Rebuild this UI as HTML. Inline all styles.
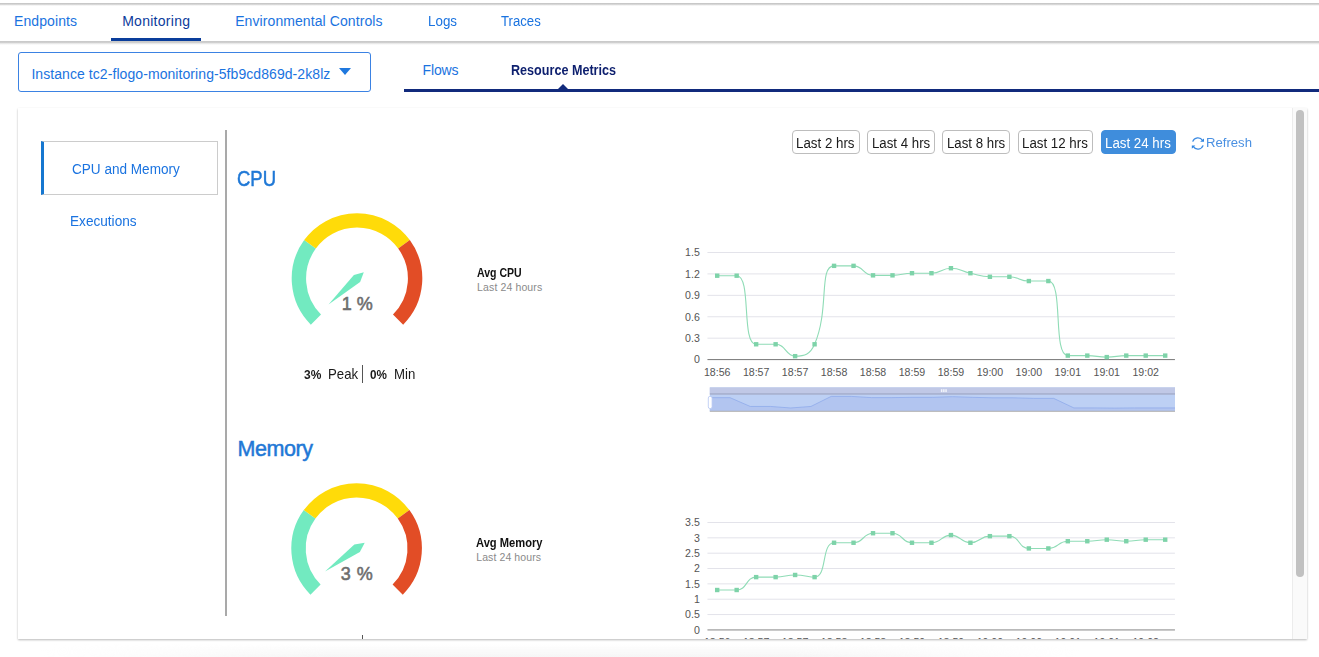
<!DOCTYPE html>
<html lang="en"><head><meta charset="utf-8"><title>Monitoring - Resource Metrics</title>
<style>
html,body{margin:0;padding:0;}
body{width:1319px;height:657px;overflow:hidden;background:#fff;position:relative;font-family:"Liberation Sans",Arial,sans-serif;}
.t{position:absolute;white-space:nowrap;line-height:1;transform-origin:0 50%;}
.abs{position:absolute;}
#topbar{position:absolute;left:0;top:2.6px;width:1319px;height:3.8px;background:linear-gradient(to bottom,#c6c6c6 0,#cbcbcb 38%,#ececec 70%,#fff 100%);}
#topcover{position:absolute;left:0;top:41.1px;width:1319px;height:4.2px;background:linear-gradient(to bottom,#c8c8c8 0,#cdcdcd 35%,#eeeeee 68%,#fff 100%);}
#tabul{position:absolute;left:111px;top:37.6px;width:90px;height:3.8px;background:#0a3d9b;}
#inst{position:absolute;left:18px;top:52px;width:351px;height:38px;border:1px solid #3b82e3;border-radius:3px;background:#fff;}
#caret{position:absolute;left:338.7px;top:68.3px;width:0;height:0;border-left:6.5px solid transparent;border-right:6.5px solid transparent;border-top:7.5px solid #1f78de;}
#subline{position:absolute;left:404px;top:89px;width:915px;height:2.8px;background:#112a7c;}
#subtri{position:absolute;left:557.6px;top:84.4px;width:0;height:0;border-left:5.7px solid transparent;border-right:5.7px solid transparent;border-bottom:5px solid #112a7c;}
#panel{position:absolute;left:18px;top:107.5px;width:1289.2px;height:531.5px;background:#fff;box-shadow:0 0.5px 2px rgba(0,0,0,.28);overflow:hidden;}
#in{position:absolute;left:-18px;top:-107.5px;width:1319px;height:800px;}
#navact{position:absolute;left:41px;top:141px;width:173px;height:52.3px;border:1px solid #ccc;border-left:3px solid #1677d0;background:#fff;}
#vdiv{position:absolute;left:225.2px;top:130px;width:1.9px;height:485.5px;background:#a9a9a9;}
.btn{position:absolute;top:130.4px;height:21.6px;border:1px solid #bdbdbd;border-radius:4px;background:#fff;}
.btn.on{background:#3f8ddc;border-color:#3f8ddc;}
#sbtrack{position:absolute;left:1292.3px;top:107.5px;width:15.2px;height:532px;background:#fafafa;border-left:1px solid #ececec;}
#sbthumb{position:absolute;left:1296.2px;top:110.3px;width:8px;height:467px;border-radius:4px;background:#c1c1c1;}
.pm{position:absolute;width:1px;background:#555;}
#botfade{position:absolute;left:40px;top:644px;width:1040px;height:13px;background:linear-gradient(to bottom,rgba(247,247,247,0),#f6f6f6);-webkit-mask-image:linear-gradient(to right,transparent,#000 28%,#000 72%,transparent);mask-image:linear-gradient(to right,transparent,#000 28%,#000 72%,transparent);}
svg{position:absolute;left:0;top:0;overflow:visible;}
svg text{font-family:"Liberation Sans",Arial,sans-serif;}
</style></head><body>
<div id="topbar"></div><div id="topcover"></div>
<div id="tabul"></div><div id="botfade"></div>

<nav id="tabs">
<span class="t" style="left:14.10px;top:13.95px;font-size:14px;color:#1a73e0;letter-spacing:0.078px;">Endpoints</span>
<span class="t" style="left:122.20px;top:13.95px;font-size:14px;color:#0b3b9c;letter-spacing:0.270px;">Monitoring</span>
<span class="t" style="left:235.20px;top:13.95px;font-size:14px;color:#1a73e0;letter-spacing:0.085px;">Environmental Controls</span>
<span class="t" style="left:427.70px;top:13.95px;font-size:14px;color:#1a73e0;transform:scaleX(0.9555);">Logs</span>
<span class="t" style="left:501.10px;top:13.95px;font-size:14px;color:#1a73e0;transform:scaleX(0.9393);">Traces</span>
</nav>
<div id="inst"></div>
<span class="t" style="left:31.40px;top:66.85px;font-size:14px;color:#1a73e0;letter-spacing:0.071px;">Instance tc2-flogo-monitoring-5fb9cd869d-2k8lz</span>
<div id="caret"></div>
<span class="t" style="left:422.50px;top:62.65px;font-size:14px;color:#1a73e0;letter-spacing:-0.139px;">Flows</span>
<span class="t" style="left:510.80px;top:62.65px;font-size:14px;color:#0d1f6e;font-weight:700;transform:scaleX(0.8996);">Resource Metrics</span>
<div id="subline"></div><div id="subtri"></div>
<div id="panel"><div id="in">
<div id="navact"></div>
<span class="t" style="left:72.30px;top:161.65px;font-size:14px;color:#1a73e0;transform:scaleX(0.9689);">CPU and Memory</span>
<span class="t" style="left:70.20px;top:213.95px;font-size:14px;color:#1a73e0;transform:scaleX(0.9724);">Executions</span>
<div id="vdiv"></div>
<div class="btn" style="left:791.8px;width:65.8px"></div>
<span class="t" style="left:796.10px;top:135.85px;font-size:14px;color:#1a1a1a;transform:scaleX(0.9516);">Last 2 hrs</span>
<div class="btn" style="left:867.3px;width:65.5px"></div>
<span class="t" style="left:871.60px;top:135.85px;font-size:14px;color:#1a1a1a;transform:scaleX(0.9467);">Last 4 hrs</span>
<div class="btn" style="left:942.3px;width:65.5px"></div>
<span class="t" style="left:946.60px;top:135.85px;font-size:14px;color:#1a1a1a;transform:scaleX(0.9467);">Last 8 hrs</span>
<div class="btn" style="left:1017.5px;width:73.8px"></div>
<span class="t" style="left:1022.00px;top:135.85px;font-size:14px;color:#1a1a1a;transform:scaleX(0.9501);">Last 12 hrs</span>
<div class="btn on" style="left:1100.7px;width:73.0px"></div>
<span class="t" style="left:1105.00px;top:135.85px;font-size:14px;color:#fff;transform:scaleX(0.9501);">Last 24 hrs</span>
<span class="t" style="left:1205.50px;top:136.09px;font-size:13.6px;color:#4a90e2;transform:scaleX(0.9661);">Refresh</span>
<span class="t" style="left:236.80px;top:168.50px;font-size:21.5px;color:#1f78d6;transform:scaleX(0.8593);-webkit-text-stroke:0.5px #1f78d6;">CPU</span>
<span class="t" style="left:476.70px;top:267.32px;font-size:12.5px;color:#111;font-weight:700;transform:scaleX(0.8432);">Avg CPU</span>
<span class="t" style="left:477.10px;top:281.61px;font-size:10.5px;color:#8a8a8a;letter-spacing:0.123px;">Last 24 hours</span>
<span class="t" style="left:237.40px;top:438.50px;font-size:21.5px;color:#1f78d6;letter-spacing:-0.387px;-webkit-text-stroke:0.5px #1f78d6;">Memory</span>
<span class="t" style="left:475.80px;top:537.32px;font-size:12.5px;color:#111;font-weight:700;transform:scaleX(0.8920);">Avg Memory</span>
<span class="t" style="left:476.20px;top:551.61px;font-size:10.5px;color:#8a8a8a;letter-spacing:0.098px;">Last 24 hours</span>
<span class="t" style="left:304.30px;top:368.62px;font-size:12.5px;color:#1a1a1a;font-weight:700;transform:scaleX(0.9578);">3%</span>
<span class="t" style="left:327.80px;top:366.93px;font-size:14.5px;color:#1a1a1a;transform:scaleX(0.9101);">Peak</span>
<div class="pm" style="left:362px;top:365.1px;height:18.3px"></div>
<span class="t" style="left:369.90px;top:368.62px;font-size:12.5px;color:#1a1a1a;font-weight:700;transform:scaleX(0.9356);">0%</span>
<span class="t" style="left:394.00px;top:366.93px;font-size:14.5px;color:#1a1a1a;transform:scaleX(0.9118);">Min</span>
<span class="t" style="left:304.30px;top:640.12px;font-size:12.5px;color:#1a1a1a;font-weight:700;transform:scaleX(0.9578);">5%</span>
<span class="t" style="left:327.80px;top:638.43px;font-size:14.5px;color:#1a1a1a;transform:scaleX(0.9101);">Peak</span>
<div class="pm" style="left:362px;top:635.1px;height:18.3px"></div>
<span class="t" style="left:369.90px;top:640.12px;font-size:12.5px;color:#1a1a1a;font-weight:700;transform:scaleX(0.9356);">1%</span>
<span class="t" style="left:394.00px;top:638.43px;font-size:14.5px;color:#1a1a1a;transform:scaleX(0.9118);">Min</span>
<svg width="1319" height="800" viewBox="0 0 1319 800">
<g id="ricon" transform="translate(1197.9,143.5)"><path d="M-5.2,-1.9A5.5,5.5 0 0 1 4.7,-2.9" fill="none" stroke="#3a8ae2" stroke-width="1.3"/><path d="M5.2,1.9A5.5,5.5 0 0 1 -4.7,2.9" fill="none" stroke="#3a8ae2" stroke-width="1.3"/><polygon points="6.1,-5.1 6.1,-1.7 2.2,-1.7" fill="#2f84e0"/><polygon points="-6.1,5.3 -6.1,1.9 -2.6,1.9" fill="#2f84e0"/></g>
<path d="M315.92,319.58A58.099999999999994,58.099999999999994 0 0 1 310.00,244.35" fill="none" stroke="#72eac0" stroke-width="14.4"/>
<path d="M310.00,244.35A58.099999999999994,58.099999999999994 0 0 1 404.00,244.35" fill="none" stroke="#ffdb09" stroke-width="14.4"/>
<path d="M404.00,244.35A58.099999999999994,58.099999999999994 0 0 1 398.08,319.58" fill="none" stroke="#e24d26" stroke-width="14.4"/>
<polygon points="363.80,272.31 353.90,275.10 328.52,304.41 360.10,281.90" fill="#72eac0"/>
<text x="341.8" y="309.7" font-size="18" font-weight="400" fill="#6e6e6e" stroke="#6e6e6e" stroke-width="0.55" textLength="30.9" lengthAdjust="spacing">1 %</text>
<path d="M315.52,589.58A58.099999999999994,58.099999999999994 0 0 1 309.60,514.35" fill="none" stroke="#72eac0" stroke-width="14.4"/>
<path d="M309.60,514.35A58.099999999999994,58.099999999999994 0 0 1 403.60,514.35" fill="none" stroke="#ffdb09" stroke-width="14.4"/>
<path d="M403.60,514.35A58.099999999999994,58.099999999999994 0 0 1 397.68,589.58" fill="none" stroke="#e24d26" stroke-width="14.4"/>
<polygon points="364.72,542.70 354.35,544.39 324.99,571.38 359.85,552.01" fill="#72eac0"/>
<text x="340.7" y="579.7" font-size="18" font-weight="400" fill="#6e6e6e" stroke="#6e6e6e" stroke-width="0.55" textLength="32.0" lengthAdjust="spacing">3 %</text>
<text x="699.8" y="363.40" font-size="10.6" fill="#555" text-anchor="end">0</text>
<line x1="707.45" x2="1174.95" y1="338.18" y2="338.18" stroke="#e3e3ea" stroke-width="1"/>
<text x="699.8" y="341.98" font-size="10.6" fill="#555" text-anchor="end">0.3</text>
<line x1="707.45" x2="1174.95" y1="316.76" y2="316.76" stroke="#e3e3ea" stroke-width="1"/>
<text x="699.8" y="320.56" font-size="10.6" fill="#555" text-anchor="end">0.6</text>
<line x1="707.45" x2="1174.95" y1="295.34" y2="295.34" stroke="#e3e3ea" stroke-width="1"/>
<text x="699.8" y="299.14" font-size="10.6" fill="#555" text-anchor="end">0.9</text>
<line x1="707.45" x2="1174.95" y1="273.92" y2="273.92" stroke="#e3e3ea" stroke-width="1"/>
<text x="699.8" y="277.72" font-size="10.6" fill="#555" text-anchor="end">1.2</text>
<line x1="707.45" x2="1174.95" y1="252.50" y2="252.50" stroke="#e3e3ea" stroke-width="1"/>
<text x="699.8" y="256.30" font-size="10.6" fill="#555" text-anchor="end">1.5</text>
<line x1="707.45" x2="1174.95" y1="359.6" y2="359.6" stroke="#777" stroke-width="1"/>
<text x="717.19" y="376.20" font-size="10.6" fill="#555" text-anchor="middle">18:56</text>
<text x="756.15" y="376.20" font-size="10.6" fill="#555" text-anchor="middle">18:57</text>
<text x="795.11" y="376.20" font-size="10.6" fill="#555" text-anchor="middle">18:57</text>
<text x="834.06" y="376.20" font-size="10.6" fill="#555" text-anchor="middle">18:58</text>
<text x="873.02" y="376.20" font-size="10.6" fill="#555" text-anchor="middle">18:58</text>
<text x="911.98" y="376.20" font-size="10.6" fill="#555" text-anchor="middle">18:59</text>
<text x="950.94" y="376.20" font-size="10.6" fill="#555" text-anchor="middle">18:59</text>
<text x="989.90" y="376.20" font-size="10.6" fill="#555" text-anchor="middle">19:00</text>
<text x="1028.86" y="376.20" font-size="10.6" fill="#555" text-anchor="middle">19:00</text>
<text x="1067.81" y="376.20" font-size="10.6" fill="#555" text-anchor="middle">19:01</text>
<text x="1106.77" y="376.20" font-size="10.6" fill="#555" text-anchor="middle">19:01</text>
<text x="1145.73" y="376.20" font-size="10.6" fill="#555" text-anchor="middle">19:02</text>
<path d="M717.19,275.70C717.19,275.70 732.49,275.70 736.67,275.70C751.97,275.70 740.85,344.28 756.15,344.28C760.33,344.28 766.66,344.28 775.63,344.28C786.14,344.28 785.37,356.17 795.11,356.17C804.85,356.17 810.30,354.23 814.59,344.28C829.78,309.07 818.37,265.85 834.06,265.85C837.85,265.85 844.32,265.85 853.54,265.85C863.80,265.85 862.76,275.35 873.02,275.35C882.24,275.35 882.79,275.35 892.50,275.35C902.27,275.35 902.21,273.21 911.98,273.21C921.69,273.21 921.88,273.21 931.46,273.21C941.36,273.21 941.20,268.21 950.94,268.21C960.68,268.21 960.60,271.05 970.42,273.21C980.08,275.33 980.08,276.78 989.90,276.78C999.56,276.78 999.75,276.78 1009.38,276.78C1019.23,276.78 1019.00,281.06 1028.86,281.06C1038.48,281.06 1044.40,281.06 1048.34,281.06C1063.88,281.06 1052.27,355.60 1067.81,355.60C1071.75,355.60 1077.57,355.60 1087.29,355.60C1097.05,355.60 1097.03,357.10 1106.77,357.10C1116.51,357.10 1116.50,355.60 1126.25,355.60C1135.98,355.60 1135.99,355.60 1145.73,355.60C1155.47,355.60 1165.21,355.60 1165.21,355.60" fill="none" stroke="#8fdcb6" stroke-width="1.1"/>
<rect x="714.99" y="273.50" width="4.4" height="4.4" fill="#7ed3a9"/>
<rect x="734.47" y="273.50" width="4.4" height="4.4" fill="#7ed3a9"/>
<rect x="753.95" y="342.08" width="4.4" height="4.4" fill="#7ed3a9"/>
<rect x="773.43" y="342.08" width="4.4" height="4.4" fill="#7ed3a9"/>
<rect x="792.91" y="353.97" width="4.4" height="4.4" fill="#7ed3a9"/>
<rect x="812.39" y="342.08" width="4.4" height="4.4" fill="#7ed3a9"/>
<rect x="831.86" y="263.65" width="4.4" height="4.4" fill="#7ed3a9"/>
<rect x="851.34" y="263.65" width="4.4" height="4.4" fill="#7ed3a9"/>
<rect x="870.82" y="273.15" width="4.4" height="4.4" fill="#7ed3a9"/>
<rect x="890.30" y="273.15" width="4.4" height="4.4" fill="#7ed3a9"/>
<rect x="909.78" y="271.01" width="4.4" height="4.4" fill="#7ed3a9"/>
<rect x="929.26" y="271.01" width="4.4" height="4.4" fill="#7ed3a9"/>
<rect x="948.74" y="266.01" width="4.4" height="4.4" fill="#7ed3a9"/>
<rect x="968.22" y="271.01" width="4.4" height="4.4" fill="#7ed3a9"/>
<rect x="987.70" y="274.58" width="4.4" height="4.4" fill="#7ed3a9"/>
<rect x="1007.18" y="274.58" width="4.4" height="4.4" fill="#7ed3a9"/>
<rect x="1026.66" y="278.86" width="4.4" height="4.4" fill="#7ed3a9"/>
<rect x="1046.14" y="278.86" width="4.4" height="4.4" fill="#7ed3a9"/>
<rect x="1065.61" y="353.40" width="4.4" height="4.4" fill="#7ed3a9"/>
<rect x="1085.09" y="353.40" width="4.4" height="4.4" fill="#7ed3a9"/>
<rect x="1104.57" y="354.90" width="4.4" height="4.4" fill="#7ed3a9"/>
<rect x="1124.05" y="353.40" width="4.4" height="4.4" fill="#7ed3a9"/>
<rect x="1143.53" y="353.40" width="4.4" height="4.4" fill="#7ed3a9"/>
<rect x="1163.01" y="353.40" width="4.4" height="4.4" fill="#7ed3a9"/>
<text x="699.8" y="633.70" font-size="10.6" fill="#555" text-anchor="end">0</text>
<line x1="707.45" x2="1174.95" y1="614.56" y2="614.56" stroke="#e3e3ea" stroke-width="1"/>
<text x="699.8" y="618.36" font-size="10.6" fill="#555" text-anchor="end">0.5</text>
<line x1="707.45" x2="1174.95" y1="599.21" y2="599.21" stroke="#e3e3ea" stroke-width="1"/>
<text x="699.8" y="603.01" font-size="10.6" fill="#555" text-anchor="end">1</text>
<line x1="707.45" x2="1174.95" y1="583.87" y2="583.87" stroke="#e3e3ea" stroke-width="1"/>
<text x="699.8" y="587.67" font-size="10.6" fill="#555" text-anchor="end">1.5</text>
<line x1="707.45" x2="1174.95" y1="568.53" y2="568.53" stroke="#e3e3ea" stroke-width="1"/>
<text x="699.8" y="572.33" font-size="10.6" fill="#555" text-anchor="end">2</text>
<line x1="707.45" x2="1174.95" y1="553.19" y2="553.19" stroke="#e3e3ea" stroke-width="1"/>
<text x="699.8" y="556.99" font-size="10.6" fill="#555" text-anchor="end">2.5</text>
<line x1="707.45" x2="1174.95" y1="537.84" y2="537.84" stroke="#e3e3ea" stroke-width="1"/>
<text x="699.8" y="541.64" font-size="10.6" fill="#555" text-anchor="end">3</text>
<line x1="707.45" x2="1174.95" y1="522.50" y2="522.50" stroke="#e3e3ea" stroke-width="1"/>
<text x="699.8" y="526.30" font-size="10.6" fill="#555" text-anchor="end">3.5</text>
<line x1="707.45" x2="1174.95" y1="629.9" y2="629.9" stroke="#b9b9b9" stroke-width="1.6"/>
<text x="717.19" y="645.60" font-size="10.6" fill="#555" text-anchor="middle">18:56</text>
<text x="756.15" y="645.60" font-size="10.6" fill="#555" text-anchor="middle">18:57</text>
<text x="795.11" y="645.60" font-size="10.6" fill="#555" text-anchor="middle">18:57</text>
<text x="834.06" y="645.60" font-size="10.6" fill="#555" text-anchor="middle">18:58</text>
<text x="873.02" y="645.60" font-size="10.6" fill="#555" text-anchor="middle">18:58</text>
<text x="911.98" y="645.60" font-size="10.6" fill="#555" text-anchor="middle">18:59</text>
<text x="950.94" y="645.60" font-size="10.6" fill="#555" text-anchor="middle">18:59</text>
<text x="989.90" y="645.60" font-size="10.6" fill="#555" text-anchor="middle">19:00</text>
<text x="1028.86" y="645.60" font-size="10.6" fill="#555" text-anchor="middle">19:00</text>
<text x="1067.81" y="645.60" font-size="10.6" fill="#555" text-anchor="middle">19:01</text>
<text x="1106.77" y="645.60" font-size="10.6" fill="#555" text-anchor="middle">19:01</text>
<text x="1145.73" y="645.60" font-size="10.6" fill="#555" text-anchor="middle">19:02</text>
<path d="M717.19,590.01C717.19,590.01 727.81,590.01 736.67,590.01C747.29,590.01 745.53,577.12 756.15,577.12C765.01,577.12 765.92,577.12 775.63,577.12C785.40,577.12 785.37,574.97 795.11,574.97C804.85,574.97 808.13,577.12 814.59,577.12C827.61,577.12 821.02,542.75 834.06,542.75C840.50,542.75 844.32,542.75 853.54,542.75C863.80,542.75 862.76,533.24 873.02,533.24C882.24,533.24 883.28,533.24 892.50,533.24C902.76,533.24 901.72,542.75 911.98,542.75C921.20,542.75 922.07,542.75 931.46,542.75C941.55,542.75 941.20,535.08 950.94,535.08C960.68,535.08 960.59,542.75 970.42,542.75C980.07,542.75 979.89,536.16 989.90,536.16C999.37,536.16 1000.45,536.16 1009.38,536.16C1019.93,536.16 1018.30,548.43 1028.86,548.43C1037.78,548.43 1038.91,548.43 1048.34,548.43C1058.39,548.43 1057.76,541.22 1067.81,541.22C1077.24,541.22 1077.57,541.22 1087.29,541.22C1097.05,541.22 1097.03,539.68 1106.77,539.68C1116.51,539.68 1116.51,541.22 1126.25,541.22C1135.99,541.22 1135.98,539.68 1145.73,539.68C1155.46,539.68 1165.21,539.68 1165.21,539.68" fill="none" stroke="#8fdcb6" stroke-width="1.1"/>
<rect x="714.99" y="587.81" width="4.4" height="4.4" fill="#7ed3a9"/>
<rect x="734.47" y="587.81" width="4.4" height="4.4" fill="#7ed3a9"/>
<rect x="753.95" y="574.92" width="4.4" height="4.4" fill="#7ed3a9"/>
<rect x="773.43" y="574.92" width="4.4" height="4.4" fill="#7ed3a9"/>
<rect x="792.91" y="572.77" width="4.4" height="4.4" fill="#7ed3a9"/>
<rect x="812.39" y="574.92" width="4.4" height="4.4" fill="#7ed3a9"/>
<rect x="831.86" y="540.55" width="4.4" height="4.4" fill="#7ed3a9"/>
<rect x="851.34" y="540.55" width="4.4" height="4.4" fill="#7ed3a9"/>
<rect x="870.82" y="531.04" width="4.4" height="4.4" fill="#7ed3a9"/>
<rect x="890.30" y="531.04" width="4.4" height="4.4" fill="#7ed3a9"/>
<rect x="909.78" y="540.55" width="4.4" height="4.4" fill="#7ed3a9"/>
<rect x="929.26" y="540.55" width="4.4" height="4.4" fill="#7ed3a9"/>
<rect x="948.74" y="532.88" width="4.4" height="4.4" fill="#7ed3a9"/>
<rect x="968.22" y="540.55" width="4.4" height="4.4" fill="#7ed3a9"/>
<rect x="987.70" y="533.96" width="4.4" height="4.4" fill="#7ed3a9"/>
<rect x="1007.18" y="533.96" width="4.4" height="4.4" fill="#7ed3a9"/>
<rect x="1026.66" y="546.23" width="4.4" height="4.4" fill="#7ed3a9"/>
<rect x="1046.14" y="546.23" width="4.4" height="4.4" fill="#7ed3a9"/>
<rect x="1065.61" y="539.02" width="4.4" height="4.4" fill="#7ed3a9"/>
<rect x="1085.09" y="539.02" width="4.4" height="4.4" fill="#7ed3a9"/>
<rect x="1104.57" y="537.48" width="4.4" height="4.4" fill="#7ed3a9"/>
<rect x="1124.05" y="539.02" width="4.4" height="4.4" fill="#7ed3a9"/>
<rect x="1143.53" y="537.48" width="4.4" height="4.4" fill="#7ed3a9"/>
<rect x="1163.01" y="537.48" width="4.4" height="4.4" fill="#7ed3a9"/>
<rect x="709.8" y="387.4" width="465.20000000000005" height="23.900000000000034" fill="#bdd0f4"/>
<polygon points="709.8,411.3 709.80,397.66 730.03,397.66 750.25,406.46 770.48,406.46 790.70,407.98 810.93,406.46 831.16,396.40 851.38,396.40 871.61,397.62 891.83,397.62 912.06,397.34 932.29,397.34 952.51,396.70 972.74,397.34 992.97,397.80 1013.19,397.80 1033.42,398.35 1053.64,398.35 1073.87,407.91 1094.10,407.91 1114.32,408.10 1134.55,407.91 1154.77,407.91 1175.00,407.91 1175,411.3" fill="#b2c5f0"/>
<polyline points="709.80,397.66 730.03,397.66 750.25,406.46 770.48,406.46 790.70,407.98 810.93,406.46 831.16,396.40 851.38,396.40 871.61,397.62 891.83,397.62 912.06,397.34 932.29,397.34 952.51,396.70 972.74,397.34 992.97,397.80 1013.19,397.80 1033.42,398.35 1053.64,398.35 1073.87,407.91 1094.10,407.91 1114.32,408.10 1134.55,407.91 1154.77,407.91 1175.00,407.91" fill="none" stroke="#8aa6ea" stroke-width="0.7"/>
<rect x="709.8" y="387.4" width="465.20000000000005" height="5.9" fill="#c0c8e6"/>
<rect x="709.8" y="393.29999999999995" width="465.20000000000005" height="1.3" fill="#a2a9c4"/>
<rect x="709.8" y="410.8" width="465.20000000000005" height="0.9" fill="#b0aba6"/>
<rect x="940.9" y="389.2" width="1.5" height="2.9" fill="#f2f4fb"/>
<rect x="943.1" y="389.2" width="1.5" height="2.9" fill="#f2f4fb"/>
<rect x="945.3" y="389.2" width="1.5" height="2.9" fill="#f2f4fb"/>
<rect x="708.3" y="396.4" width="3.8" height="12.1" rx="1.6" fill="#fff" stroke="#b5c6f2" stroke-width="0.8"/>
<rect x="709.8" y="657.4" width="465.20000000000005" height="23.899999999999977" fill="#bdd0f4"/>
<polygon points="709.8,681.3 709.80,678.10 730.03,678.10 750.25,675.44 770.48,675.44 790.70,675.00 810.93,675.44 831.16,668.36 851.38,668.36 871.61,666.40 891.83,666.40 912.06,668.36 932.29,668.36 952.51,666.78 972.74,668.36 992.97,667.00 1013.19,667.00 1033.42,669.53 1053.64,669.53 1073.87,668.04 1094.10,668.04 1114.32,667.73 1134.55,668.04 1154.77,667.73 1175.00,667.73 1175,681.3" fill="#b2c5f0"/>
<polyline points="709.80,678.10 730.03,678.10 750.25,675.44 770.48,675.44 790.70,675.00 810.93,675.44 831.16,668.36 851.38,668.36 871.61,666.40 891.83,666.40 912.06,668.36 932.29,668.36 952.51,666.78 972.74,668.36 992.97,667.00 1013.19,667.00 1033.42,669.53 1053.64,669.53 1073.87,668.04 1094.10,668.04 1114.32,667.73 1134.55,668.04 1154.77,667.73 1175.00,667.73" fill="none" stroke="#8aa6ea" stroke-width="0.7"/>
<rect x="709.8" y="657.4" width="465.20000000000005" height="5.9" fill="#c0c8e6"/>
<rect x="709.8" y="663.3" width="465.20000000000005" height="1.3" fill="#a2a9c4"/>
<rect x="709.8" y="680.8" width="465.20000000000005" height="0.9" fill="#b0aba6"/>
<rect x="940.9" y="659.1999999999999" width="1.5" height="2.9" fill="#f2f4fb"/>
<rect x="943.1" y="659.1999999999999" width="1.5" height="2.9" fill="#f2f4fb"/>
<rect x="945.3" y="659.1999999999999" width="1.5" height="2.9" fill="#f2f4fb"/>
<rect x="708.3" y="666.4" width="3.8" height="12.1" rx="1.6" fill="#fff" stroke="#b5c6f2" stroke-width="0.8"/>
</svg>
<div id="sbtrack"></div><div id="sbthumb"></div>
</div></div>
</body></html>
